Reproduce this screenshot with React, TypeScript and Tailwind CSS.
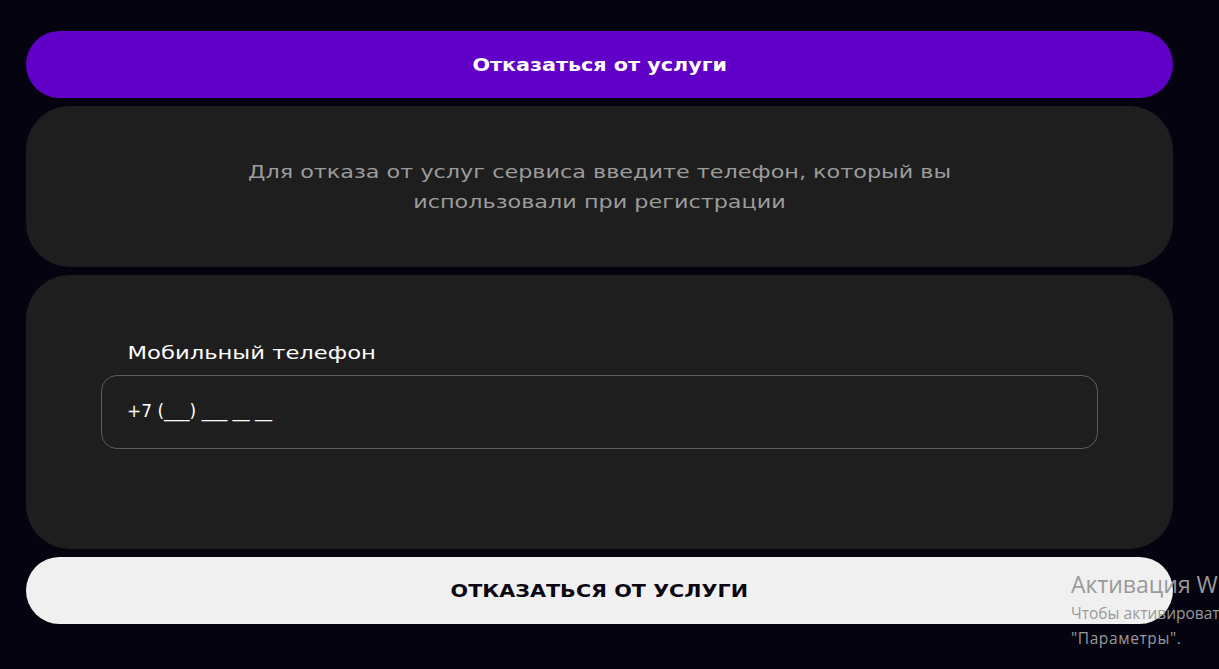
const wide = { fontFamily: '"DejaVu Sans", Verdana, sans-serif' };

export default function App() {
  return (
    <div className="relative h-[669px] w-full overflow-hidden bg-[#05030f]" style={wide}>
      <div className="ml-[26px] flex w-[1147px] flex-col gap-2 pt-[31px]">
        {/* Top action */}
        <button className="flex h-[67px] items-center justify-center rounded-full bg-[#6100c7] text-white">
          <span className="inline-block scale-x-[1.15] text-[18px] font-bold">Отказаться от услуги</span>
        </button>

        {/* Info card */}
        <div className="flex h-[161px] items-center justify-center rounded-[44px] bg-[#1e1e1e]">
          <p className="w-[575px] scale-x-[1.24] text-center text-[18px] leading-[30px] text-[#9c9c9c]">
            Для отказа от услуг сервиса введите телефон, который вы использовали при регистрации
          </p>
        </div>

        {/* Phone form */}
        <div className="flex h-[274px] flex-col rounded-[44px] bg-[#1e1e1e] px-[75px] pt-[65px]">
          <label className="mb-[10px] origin-left scale-x-[1.26] pl-[21px] text-[18px] leading-[25px] text-white">
            Мобильный телефон
          </label>
          <div className="flex h-[74px] items-center rounded-2xl border border-[#5c5c5c] px-[25px]">
            <span className="text-[17px] text-white">+7 (___) ___ __ __</span>
          </div>
        </div>

        {/* Bottom action */}
        <button className="flex h-[67px] items-center justify-center rounded-full bg-[#f0f0f0] text-[#0a0612]">
          <span className="inline-block scale-x-[1.15] text-[18px] font-bold uppercase">Отказаться от услуги</span>
        </button>
      </div>

      {/* Windows activation watermark */}
      <div
        className="pointer-events-none absolute left-[1071px] top-[568px] whitespace-nowrap text-[#9a9a9a]"
        style={{ fontFamily: '"Open Sans", "Liberation Sans", sans-serif' }}
      >
        <div className="text-[23px] leading-[32px]">Активация Windows</div>
        <div className="text-[15.5px] leading-[26px]">Чтобы активировать Windows, перейдите в раздел</div>
        <div className="text-[15.5px] leading-[24px] tracking-[0.6px]">"Параметры".</div>
      </div>
    </div>
  );
}
